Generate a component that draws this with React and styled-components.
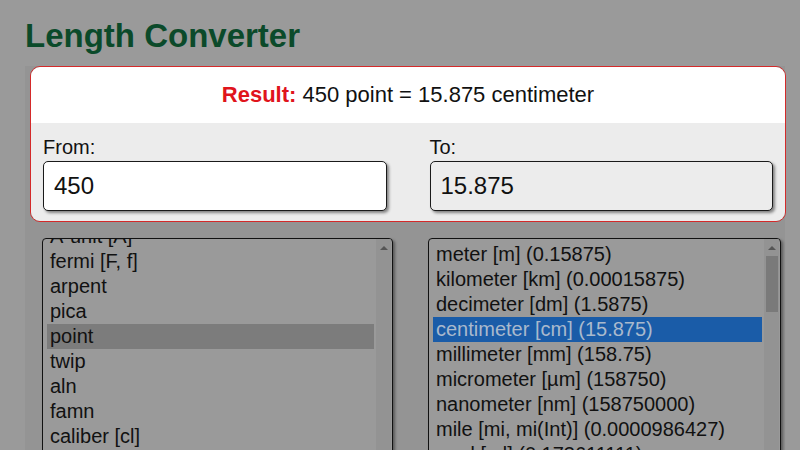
import styled, { createGlobalStyle } from "styled-components";

const GlobalStyle = createGlobalStyle`
    body {
        margin: 0;
        background: #9a9a9a;
        font-family: "Liberation Sans", Arial, sans-serif;
        color: #111;
    }
`;

const Page = styled.div`
    padding: 17px 15px 0 25px;
    height: 450px;
    box-sizing: border-box;
    overflow: hidden;
`;

const Title = styled.h1`
    margin: 0;
    font-size: 33px;
    line-height: 37px;
    font-weight: bold;
    color: #0b4a2a;
`;

const Panel = styled.div`
    margin-top: 69px;
    background: #949494;
    padding: 0 4px 0 17px;
    min-height: 400px;
`;

const Card = styled.div`
    margin: -57px -5px 0 -12px;
    border: 1px solid #d42a2a;
    border-radius: 10px;
    overflow: hidden;
`;

const ResultRow = styled.div`
    background: #fff;
    height: 56px;
    line-height: 56px;
    text-align: center;
    font-size: 22px;
`;

const ResultLabel = styled.b`
    color: #e0141c;
`;

const FormArea = styled.div`
    background: #ececec;
    padding: 13px 12px 10px;
    display: grid;
    grid-template-columns: 1fr 1fr;
    column-gap: 43px;
`;

const Field = styled.div`
    display: flex;
    flex-direction: column;
    gap: 2px;
`;

const Label = styled.label`
    font-size: 20px;
    line-height: 23px;
`;

const Input = styled.input`
    box-sizing: border-box;
    height: 50px;
    width: 100%;
    border: 1px solid #1a1a1a;
    border-radius: 5px;
    padding: 0 10px;
    font: 24px "Liberation Sans", Arial, sans-serif;
    color: #111;
    background: ${(props) => (props.readOnly ? "#ececec" : "#fff")};
    box-shadow: 2px 2px 3px rgba(0, 0, 0, 0.45);
    outline: none;
`;

const Lists = styled.div`
    display: grid;
    grid-template-columns: 351px 353px;
    column-gap: 35px;
    margin-top: 16px;
`;

const ListBox = styled.div`
    height: 240px;
    border: 1px solid #111;
    border-radius: 4px;
    background: #9a9a9a;
    box-shadow: 2px 2px 3px rgba(0, 0, 0, 0.4);
    overflow: hidden;
    display: flex;
`;

const Options = styled.div`
    flex: 1;
    padding: 0 2px 0 4px;
    margin-top: ${(props) => props.offset}px;
`;

const Option = styled.div`
    height: 25px;
    line-height: 25px;
    font-size: 20px;
    padding-left: 3px;
    white-space: nowrap;
    background: ${(props) =>
        props.selected === "blue" ? "#1a5ca8" : props.selected ? "#7c7c7c" : "transparent"};
    color: ${(props) => (props.selected === "blue" ? "#a9b9cd" : "#111")};
`;

const Scrollbar = styled.div`
    width: 15px;
    margin-right: 1px;
    background: #939393;
    display: flex;
    flex-direction: column;
    align-items: center;
`;

const Arrow = styled.div`
    margin: 7px 0 6px;
    width: 0;
    height: 0;
    border-left: 4px solid transparent;
    border-right: 4px solid transparent;
    border-bottom: 4px solid #555;
`;

const Thumb = styled.div`
    width: 12px;
    height: 56px;
    background: #7a7a7a;
`;

const fromUnits = [
    "A-unit [A]",
    "fermi [F, f]",
    "arpent",
    "pica",
    "point",
    "twip",
    "aln",
    "famn",
    "caliber [cl]",
    "centiinch [cin]",
];

const toUnits = [
    "meter [m] (0.15875)",
    "kilometer [km] (0.00015875)",
    "decimeter [dm] (1.5875)",
    "centimeter [cm] (15.875)",
    "millimeter [mm] (158.75)",
    "micrometer [µm] (158750)",
    "nanometer [nm] (158750000)",
    "mile [mi, mi(Int)] (0.0000986427)",
    "yard [yd] (0.173611111)",
];

const App = () => {
    return (
        <>
            <GlobalStyle />
            <Page>
                <Title>Length Converter</Title>
                <Panel>
                    <Card>
                        <ResultRow>
                            <ResultLabel>Result:</ResultLabel> 450 point = 15.875 centimeter
                        </ResultRow>
                        <FormArea>
                            <Field>
                                <Label>From:</Label>
                                <Input defaultValue="450" />
                            </Field>
                            <Field>
                                <Label>To:</Label>
                                <Input readOnly value="15.875" />
                            </Field>
                        </FormArea>
                    </Card>
                    <Lists>
                        <ListBox>
                            <Options offset={-15}>
                                {fromUnits.map((u) => (
                                    <Option key={u} selected={u === "point"}>{u}</Option>
                                ))}
                            </Options>
                            <Scrollbar>
                                <Arrow />
                            </Scrollbar>
                        </ListBox>
                        <ListBox>
                            <Options offset={3}>
                                {toUnits.map((u, i) => (
                                    <Option key={u} selected={i === 3 ? "blue" : false}>{u}</Option>
                                ))}
                            </Options>
                            <Scrollbar>
                                <Arrow />
                                <Thumb />
                            </Scrollbar>
                        </ListBox>
                    </Lists>
                </Panel>
            </Page>
        </>
    );
};

export default App;
